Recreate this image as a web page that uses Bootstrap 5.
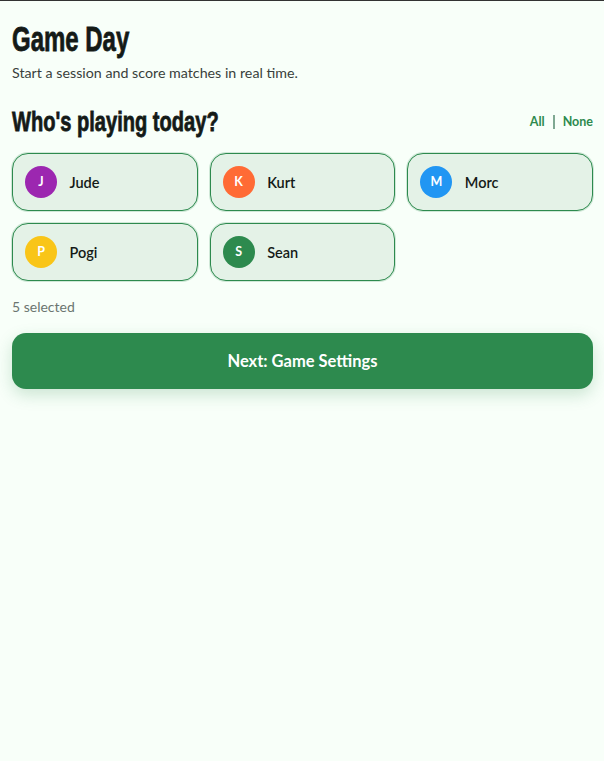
<!DOCTYPE html>
<html lang="en">
<head>
<meta charset="utf-8">
<title>Game Day</title>
<link href="https://cdn.jsdelivr.net/npm/bootstrap@5.3.0/dist/css/bootstrap.min.css" rel="stylesheet">
<style>
html, body { height: 100%; }
body { background: #f8fff9; font-family: "Lato", "Noto Sans", sans-serif; color: #1a1a1a; border-top: 1px solid #333; }
.page-wrap { padding: 13px 11px 12px 12px; }
.display-head { font-family: "Liberation Sans", "Arial", sans-serif; font-weight: 700; color: #141a17; margin: 0; -webkit-text-stroke: .8px #141a17; transform-origin: left center; white-space: nowrap; }
.title-main { font-size: 35px; line-height: 49px; transform: scaleX(.685); }
.title-sub { font-size: 28px; line-height: 42px; transform: scaleX(.717); width: 206px; }
.intro { font-size: 14.25px; line-height: 20px; color: #3a3f3c; margin: 0 0 18px; }
.pick-link { font-size: 12.5px; font-weight: 700; color: #2d8a4e; text-decoration: none; }
.pick-sep { width: 2px; height: 14px; background: #7fa892; }
.pick-grid { display: grid; grid-template-columns: repeat(3, 1fr); gap: 12px; margin-top: 10px; }
.player { height: 58px; background: #e4f2e7; border: 1.5px solid #2d8a4e; border-radius: 16px; padding: 0 12px; gap: 12.5px; box-shadow: 0 0 0 1px rgba(45,138,78,.2); }
.avatar { width: 32px; height: 32px; font-size: 12.5px; font-weight: 700; color: #fff; flex: none; }
.player-name { font-size: 14.5px; font-weight: 600; color: #141a17; padding-top: 1px; }
.av-purple { background: #9c27b0; }
.av-orange { background: #ff6b35; }
.av-blue { background: #2196f3; }
.av-yellow { background: #f9c518; }
.av-green { background: #2d8a4e; }
.count { font-size: 14px; line-height: 20px; color: #6b7570; margin: 16px 0; }
.next-btn { height: 56px; background: #2d8a4e; border: 0; border-radius: 14px; color: #fff; font-size: 16.5px; font-weight: 700; box-shadow: 0 6px 16px rgba(45,138,78,.22); }
.next-btn:hover { background: #2d8a4e; color: #fff; }
</style>
</head>
<body>
<main class="page-wrap">
  <h1 class="display-head title-main">Game Day</h1>
  <p class="intro">Start a session and score matches in real time.</p>
  <div class="d-flex justify-content-between align-items-center">
    <h2 class="display-head title-sub">Who's playing today?</h2>
    <div class="d-flex align-items-center gap-2">
      <a class="pick-link" href="#">All</a>
      <span class="pick-sep"></span>
      <a class="pick-link" href="#">None</a>
    </div>
  </div>
  <div class="pick-grid">
    <div class="player d-flex align-items-center"><span class="avatar av-purple rounded-circle d-flex align-items-center justify-content-center">J</span><span class="player-name">Jude</span></div>
    <div class="player d-flex align-items-center"><span class="avatar av-orange rounded-circle d-flex align-items-center justify-content-center">K</span><span class="player-name">Kurt</span></div>
    <div class="player d-flex align-items-center"><span class="avatar av-blue rounded-circle d-flex align-items-center justify-content-center">M</span><span class="player-name">Morc</span></div>
    <div class="player d-flex align-items-center"><span class="avatar av-yellow rounded-circle d-flex align-items-center justify-content-center">P</span><span class="player-name">Pogi</span></div>
    <div class="player d-flex align-items-center"><span class="avatar av-green rounded-circle d-flex align-items-center justify-content-center">S</span><span class="player-name">Sean</span></div>
  </div>
  <p class="count">5 selected</p>
  <button type="button" class="btn next-btn w-100">Next: Game Settings</button>
</main>
<script src="https://cdn.jsdelivr.net/npm/bootstrap@5.3.0/dist/js/bootstrap.bundle.min.js"></script>
</body>
</html>
